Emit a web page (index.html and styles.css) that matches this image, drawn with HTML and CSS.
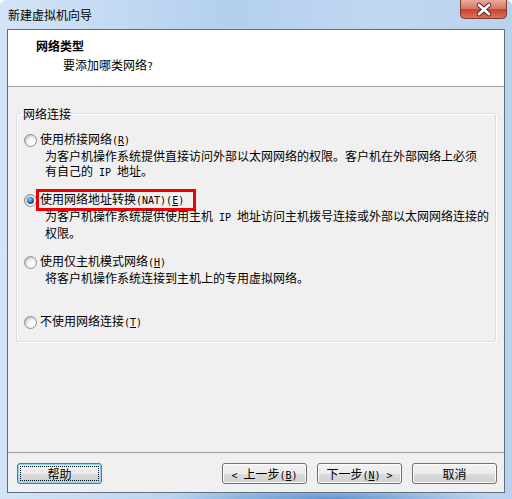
FILE: index.html
```html
<!DOCTYPE html>
<html lang="zh-CN">
<head>
<meta charset="utf-8">
<link rel="stylesheet" href="styles.css">
</head>
<body>
<div class="window">
  <div class="titlebar">
    <span class="title">新建虚拟机向导</span>
    <div class="close">
      <svg width="47" height="19" viewBox="0 0 47 19">
        <defs>
          <linearGradient id="cg" x1="0" y1="0" x2="0" y2="1">
            <stop offset="0" stop-color="#e8ab9f"/>
            <stop offset="0.48" stop-color="#d77563"/>
            <stop offset="0.5" stop-color="#c8432b"/>
            <stop offset="1" stop-color="#d9765c"/>
          </linearGradient>
        </defs>
        <path d="M0.5 0 V14.5 Q0.5 18.5 4.5 18.5 H42.5 Q46.5 18.5 46.5 14.5 V0" fill="url(#cg)" stroke="#7d3a30"/>
        <path d="M19 5 L29 14 M29 5 L19 14" stroke="#5e2a24" stroke-width="4.6" stroke-linecap="round"/>
        <path d="M19 5 L29 14 M29 5 L19 14" stroke="#ffffff" stroke-width="2.6" stroke-linecap="round"/>
      </svg>
    </div>
  </div>
  <div class="client">
    <div class="header">
      <div class="h-title">网络类型</div>
      <div class="h-sub">要添加哪类网络<span class="a">?</span></div>
    </div>
    <div class="body">
      <fieldset class="group">
        <legend>网络连接</legend>
        <div class="opt">
          <div class="row">
            <svg class="rb" width="13" height="13" viewBox="0 0 13 13">
              <defs><radialGradient id="r1" cx="0.65" cy="0.65" r="0.65"><stop offset="0" stop-color="#ffffff"/><stop offset="0.6" stop-color="#f1f1f1"/><stop offset="1" stop-color="#c4c4c4"/></radialGradient></defs>
              <circle cx="6.5" cy="6.5" r="6" fill="url(#r1)" stroke="#8e8f8f"/>
            </svg>
            <span>使用桥接网络<span class="a">(<u>R</u>)</span></span>
          </div>
          <div class="desc">为客户机操作系统提供直接访问外部以太网网络的权限。客户机在外部网络上必须</div>
          <div class="desc">有自己的<span class="a"> IP </span>地址。</div>
        </div>
        <div class="opt opt2">
          <div class="row">
            <svg class="rb" width="13" height="13" viewBox="0 0 13 13">
              <defs>
                <radialGradient id="r2" cx="0.65" cy="0.65" r="0.65"><stop offset="0" stop-color="#ffffff"/><stop offset="0.6" stop-color="#f1f1f1"/><stop offset="1" stop-color="#c4c4c4"/></radialGradient>
                <radialGradient id="d2" cx="0.4" cy="0.35" r="0.7"><stop offset="0" stop-color="#9fe0ff"/><stop offset="0.45" stop-color="#2b8fdc"/><stop offset="1" stop-color="#0b3c76"/></radialGradient>
              </defs>
              <circle cx="6.5" cy="6.5" r="6" fill="url(#r2)" stroke="#8e8f8f"/>
              <circle cx="6.5" cy="6.5" r="3.5" fill="url(#d2)"/>
            </svg>
            <span class="mark">使用网络地址转换<span class="a">(NAT)(<u>E</u>)</span></span>
          </div>
          <div class="desc">为客户机操作系统提供使用主机<span class="a"> IP </span>地址访问主机拨号连接或外部以太网网络连接的</div>
          <div class="desc">权限。</div>
        </div>
        <div class="opt opt3">
          <div class="row">
            <svg class="rb" width="13" height="13" viewBox="0 0 13 13">
              <defs><radialGradient id="r3" cx="0.65" cy="0.65" r="0.65"><stop offset="0" stop-color="#ffffff"/><stop offset="0.6" stop-color="#f1f1f1"/><stop offset="1" stop-color="#c4c4c4"/></radialGradient></defs>
              <circle cx="6.5" cy="6.5" r="6" fill="url(#r3)" stroke="#8e8f8f"/>
            </svg>
            <span>使用仅主机模式网络<span class="a">(<u>H</u>)</span></span>
          </div>
          <div class="desc">将客户机操作系统连接到主机上的专用虚拟网络。</div>
        </div>
        <div class="opt opt4">
          <div class="row">
            <svg class="rb" width="13" height="13" viewBox="0 0 13 13">
              <defs><radialGradient id="r4" cx="0.65" cy="0.65" r="0.65"><stop offset="0" stop-color="#ffffff"/><stop offset="0.6" stop-color="#f1f1f1"/><stop offset="1" stop-color="#c4c4c4"/></radialGradient></defs>
              <circle cx="6.5" cy="6.5" r="6" fill="url(#r4)" stroke="#8e8f8f"/>
            </svg>
            <span>不使用网络连接<span class="a">(<u>T</u>)</span></span>
          </div>
        </div>
      </fieldset>
      <div class="spacer"></div>
      <div class="sep"></div>
      <div class="buttons">
        <button class="btn btn-default"><span class="focus">帮助</span></button>
        <button class="btn btn-back"><span class="a">&lt; </span>上一步<span class="a">(<u>B</u>)</span></button>
        <button class="btn">下一步<span class="a">(<u>N</u>) &gt;</span></button>
        <button class="btn">取消</button>
      </div>
    </div>
  </div>
</div>
</body>
</html>
```

FILE: styles.css
```css
html, body {
  margin: 0;
  padding: 0;
}

body {
  width: 512px;
  height: 499px;
  overflow: hidden;
  background: #ffffff;
  font-family: "Noto Sans CJK SC", sans-serif;
  font-size: 12px;
  color: #000000;
}

.window {
  box-sizing: border-box;
  height: 499px;
  display: flex;
  flex-direction: column;
  padding: 0 7px 6px 7px;
  border-radius: 6px 6px 0 0;
  background:
    radial-gradient(ellipse 160px 14px at 330px 499px, #5f93cc 0%, rgba(95,147,204,0) 100%),
    linear-gradient(to right, #d3e4f6 0%, #b3cfee 45%, #c2d8f1 75%, #b9d2ee 100%);
}

.titlebar {
  height: 29px;
  display: flex;
  justify-content: space-between;
  align-items: flex-start;
  margin: 0 -2px 0 0;
}

.title {
  padding: 7px 0 0 1px;
  line-height: 15px;
  color: #000000;
}

.close {
  width: 47px;
  height: 19px;
}

.close svg {
  display: block;
}

.client {
  flex: 1;
  display: flex;
  flex-direction: column;
  border: 1px solid #5f6d7d;
  background: #f0f0f0;
}

.header {
  box-sizing: border-box;
  height: 57px;
  background: #ffffff;
  border-bottom: 1px solid #a0a0a0;
  padding: 8px 0 0 28px;
}

.h-title {
  font-weight: bold;
  line-height: 15px;
}

.h-sub {
  margin: 4px 0 0 27px;
  line-height: 15px;
}

.body {
  flex: 1;
  display: flex;
  flex-direction: column;
}

.group {
  margin: 19px 8px 0 8px;
  padding: 11px 0 11px 0;
  border: 1px solid #d5dfe5;
  border-radius: 3px;
  box-shadow: inset 1px 1px 0 #ffffff, 1px 1px 0 #ffffff;
  min-width: 0;
}

.group legend {
  margin-left: 4px;
  padding: 0 2px;
  line-height: 15px;
}

.row {
  display: flex;
  align-items: center;
  gap: 3px;
  height: 16px;
  line-height: 16px;
  padding-left: 7px;
  white-space: nowrap;
}

.rb {
  display: block;
  flex: none;
}

.desc {
  padding-left: 28px;
  line-height: 15px;
  white-space: nowrap;
}

.opt2 { margin-top: 12px; }
.opt3 { margin-top: 14px; }
.opt4 { margin-top: 29px; }

.mark {
  display: inline-block;
  line-height: 14px;
  border: 3px solid #ee0000;
  margin: -3px 0 -3px -4px;
  padding: 0 9px 0 1px;
}

.a {
  font-family: "DejaVu Sans Mono", monospace;
  font-size: 10px;
  white-space: pre;
}

u {
  text-decoration: underline;
  text-underline-offset: 1px;
}

.spacer {
  flex: 1;
}

.sep {
  height: 0;
  border-top: 1px solid #a0a0a0;
}

.buttons {
  display: flex;
  gap: 10px;
  padding: 10px 7px 8px 9px;
}

.btn {
  box-sizing: border-box;
  width: 85px;
  height: 21px;
  margin: 0;
  padding: 0;
  border: 1px solid #707070;
  border-radius: 3px;
  background: linear-gradient(#f2f2f2 0%, #ebebeb 50%, #dddddd 51%, #cfcfcf 100%);
  box-shadow: inset 0 0 0 1px #fcfcfc;
  font-family: "Noto Sans CJK SC", sans-serif;
  font-size: 12px;
  line-height: 19px;
  color: #000000;
  text-align: center;
  white-space: nowrap;
}

.btn-default {
  border-color: #3c7fb1;
  box-shadow: inset 0 0 0 1px #8fd3f5;
  padding: 2px;
}

.focus {
  display: block;
  box-sizing: border-box;
  height: 15px;
  line-height: 13px;
  border: 1px dotted #000000;
}

.btn-back {
  margin-left: auto;
}
```
